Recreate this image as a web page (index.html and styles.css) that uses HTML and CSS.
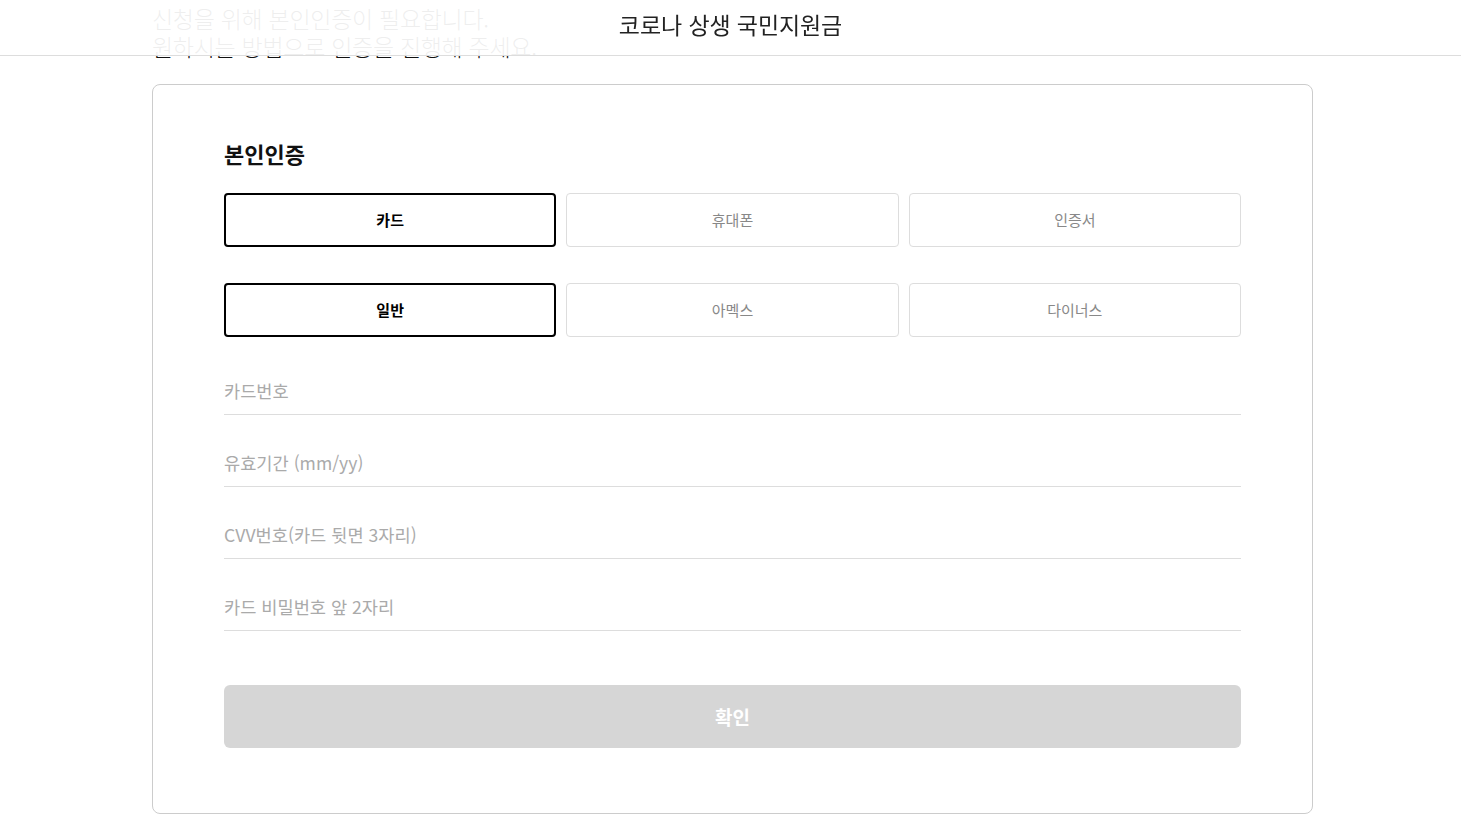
FILE: index.html
```html
<!DOCTYPE html>
<html lang="ko">
<head>
    <meta charset="UTF-8">
    <title>코로나 상생 국민지원금</title>
    <link rel="stylesheet" href="styles.css">
</head>
<body>

<div class="header">
    <h1 class="header-title">코로나 상생 국민지원금</h1>
</div>

<div class="wrap">
    <p class="intro">신청을 위해 본인인증이 필요합니다.<br>원하시는 방법으로 인증을 진행해 주세요.</p>

    <div class="card">
        <h2 class="card-title">본인인증</h2>

        <ul class="tabs">
            <li class="tab on">카드</li>
            <li class="tab">휴대폰</li>
            <li class="tab">인증서</li>
        </ul>
        <ul class="tabs tabs-sub">
            <li class="tab on">일반</li>
            <li class="tab">아멕스</li>
            <li class="tab">다이너스</li>
        </ul>

        <div class="fields">
            <input class="field" type="text" placeholder="카드번호">
            <input class="field" type="text" placeholder="유효기간 (mm/yy)">
            <input class="field" type="text" placeholder="CVV번호(카드 뒷면 3자리)">
            <input class="field" type="password" placeholder="카드 비밀번호 앞 2자리">
        </div>

        <button class="btn-ok" type="button">확인</button>
    </div>
</div>

</body>
</html>
```

FILE: styles.css
```css
* {
    margin: 0;
    padding: 0;
    box-sizing: border-box;
}

ul, li {
    list-style: none;
}

body {
    padding-left: 4px;
    font-family: "Noto Sans CJK KR", "Noto Sans", sans-serif;
    color: #111;
    background: #fff;
}

/* 상단 고정 헤더 - 살짝 비치는 흰 배경 */
.header {
    position: fixed;
    top: 0;
    left: 0;
    right: 0;
    height: 56px;
    background: rgba(255, 255, 255, 0.93);
    border-bottom: 1px solid #ddd;
    text-align: center;
    z-index: 10;
}
.header-title {
    font-size: 23px;
    font-weight: 400;
    line-height: 49px;
    letter-spacing: -0.1px;
    color: #222;
}

.wrap {
    width: 1161px;
    margin: 0 auto;
}

.intro {
    padding-top: 4px;
    margin-bottom: 24px;
    font-size: 23px;
    font-weight: 300;
    line-height: 28px;
    letter-spacing: -0.3px;
    color: #111;
}

.card {
    border: 1px solid #ccc;
    border-radius: 8px;
    padding: 53px 71px 65px;
}
.card-title {
    font-size: 22px;
    font-weight: 700;
    line-height: 31px;
    margin-bottom: 24px;
}

.tabs {
    display: grid;
    grid-template-columns: repeat(3, 1fr);
    column-gap: 10px;
}
.tabs-sub {
    margin-top: 36px;
}
.tab {
    height: 54px;
    padding-bottom: 2px;
    border: 1px solid #ddd;
    border-radius: 4px;
    display: flex;
    align-items: center;
    justify-content: center;
    font-size: 15px;
    color: #888;
    cursor: pointer;
}
.tab.on {
    border: 2px solid #000;
    color: #000;
    font-weight: 700;
}

.fields {
    display: flex;
    flex-direction: column;
    gap: 25px;
    margin-top: 31px;
}
.field {
    display: block;
    width: 100%;
    height: 47px;
    padding: 10px 0 12px;
    border: none;
    border-bottom: 1px solid #ddd;
    outline: none;
    font-family: inherit;
    font-size: 17.6px;
    line-height: 24px;
    color: #111;
}
.field::placeholder {
    color: #aaa;
}

.btn-ok {
    display: block;
    width: 100%;
    height: 63px;
    margin-top: 54px;
    border: none;
    border-radius: 6px;
    background: #d6d6d6;
    color: #fff;
    font-family: inherit;
    font-size: 19px;
    font-weight: 700;
}
```
